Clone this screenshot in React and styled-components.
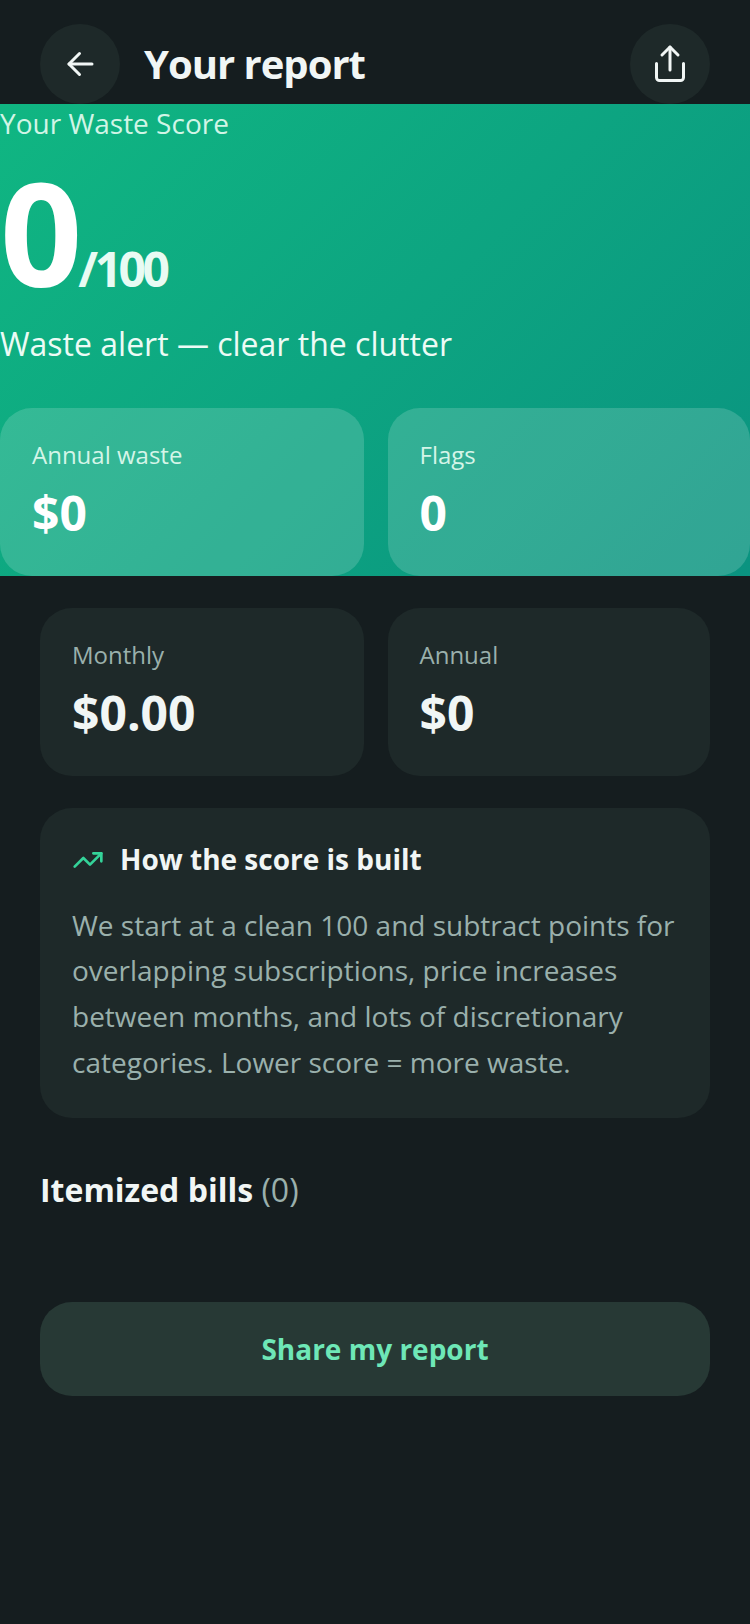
import React from "react";
import styled, { createGlobalStyle } from "styled-components";

const Global = createGlobalStyle`
  html, body { margin: 0; padding: 0; background: #151d1f; }
  body { font-family: "Open Sans", "Noto Sans", sans-serif; }
  * { box-sizing: border-box; }
`;
const Page = styled.div`
  width: 750px; height: 1624px; overflow: hidden; background: #151d1f;
  display: flex; flex-direction: column;
`;
const Header = styled.header`
  height: 104px; padding: 24px 40px 0; display: flex; align-items: flex-start; gap: 24px;
`;
const RoundButton = styled.button`
  width: 80px; height: 80px; border-radius: 50%; border: 0; padding: 0; background: #1e2929;
  color: #f1f6f5; display: flex; align-items: center; justify-content: center; flex: none;
`;
const Title = styled.h1`
  flex: 1; margin: 0; font-size: 40px; letter-spacing: -1px; line-height: 80px; font-weight: 700; color: #f1f6f5;
`;
const Hero = styled.section`
  height: 472px; background: linear-gradient(135deg, #10b682 0%, #0a9380 100%); color: #fff;
  display: flex; flex-direction: column;
`;
const HeroLabel = styled.div`
  font-size: 28px; line-height: 38px; color: #d1f5e6;
`;
const ScoreRow = styled.div`
  display: flex; align-items: baseline; height: 128px; margin-top: 25px; line-height: 128px;
`;
const ScoreValue = styled.span`
  font-size: 144px; font-weight: 700; letter-spacing: -4px; line-height: 128px;
`;
const ScoreMax = styled.span`
  font-size: 48px; font-weight: 700; letter-spacing: -3.5px; color: #e8fbf3;
`;
const Verdict = styled.div`
  font-size: 32px; line-height: 44px; margin-top: 27px; color: #ecfbf5;
`;
const Stats = styled.div`
  display: grid; grid-template-columns: ${p => p.$first} 1fr; gap: 24px;
`;
const HeroStats = styled(Stats)`
  margin-top: auto;
`;
const StatCard = styled.div`
  height: 168px; border-radius: 32px; padding: 31px 32px 0; background: ${p => p.$bg};
`;
const StatLabel = styled.div`
  font-size: 24px; line-height: 32px; color: ${p => p.$color};
`;
const StatValue = styled.div`
  font-size: 48px; line-height: 60px; font-weight: 700; margin-top: 12px; color: ${p => p.$color};
`;
const Body = styled.main`
  padding: 32px 40px 0; display: flex; flex-direction: column;
`;
const Info = styled.section`
  margin-top: 32px; height: 310px; border-radius: 32px; background: #1e2929; padding: 32px;
`;
const InfoHead = styled.div`
  display: flex; align-items: center; gap: 16px; height: 39px;
`;
const InfoTitle = styled.h2`
  margin: 0; font-size: 28px; line-height: 39px; font-weight: 700; color: #f1f6f5;
`;
const InfoText = styled.p`
  margin: 23.5px 0 0; font-size: 28px; line-height: 45.8px; color: #9ab0ac;
`;
const Bills = styled.h3`
  margin: 50px 0 0; font-size: 32px; line-height: 44px; font-weight: 700; color: #f1f6f5;
`;
const BillsCount = styled.span`
  font-weight: 400; color: #9ab0ac;
`;
const Share = styled.button`
  margin-top: 90px; height: 94px; border: 0; border-radius: 32px; background: #273935;
  color: #6ee7b7; font: 700 28px "Open Sans", sans-serif;
`;

export default function App() {
  return (
    <Page>
      <Global />
      <Header>
        <RoundButton aria-label="Back">
          <svg width="40" height="40" viewBox="0 0 40 40" fill="none" stroke="currentColor" strokeWidth="3" strokeLinecap="round" strokeLinejoin="round"><path d="M32 20H9" /><path d="M19.5 30.5 9 20 19.5 9.5" /></svg>
        </RoundButton>
        <Title>Your report</Title>
        <RoundButton aria-label="Share">
          <svg width="40" height="40" viewBox="0 0 40 40" fill="none" stroke="currentColor" strokeWidth="3" strokeLinecap="round" strokeLinejoin="round"><path d="M20 3v23" /><path d="M12 11l8-8 8 8" /><path d="M6.5 19.5V33.5a3 3 0 0 0 3 3h21a3 3 0 0 0 3-3V19.5" /></svg>
        </RoundButton>
      </Header>
      <Hero>
        <HeroLabel>Your Waste Score</HeroLabel>
        <ScoreRow><ScoreValue>0</ScoreValue><ScoreMax>/100</ScoreMax></ScoreRow>
        <Verdict>Waste alert — clear the clutter</Verdict>
        <HeroStats $first="363.5px">
          <StatCard $bg="rgba(255,255,255,0.16)">
            <StatLabel $color="#d5f5e8">Annual waste</StatLabel>
            <StatValue $color="#fff">$0</StatValue>
          </StatCard>
          <StatCard $bg="rgba(255,255,255,0.16)">
            <StatLabel $color="#d5f5e8">Flags</StatLabel>
            <StatValue $color="#fff">0</StatValue>
          </StatCard>
        </HeroStats>
      </Hero>
      <Body>
        <Stats $first="323.5px">
          <StatCard $bg="#1e2929">
            <StatLabel $color="#9ab0ac">Monthly</StatLabel>
            <StatValue $color="#f1f6f5">$0.00</StatValue>
          </StatCard>
          <StatCard $bg="#1e2929">
            <StatLabel $color="#9ab0ac">Annual</StatLabel>
            <StatValue $color="#f1f6f5">$0</StatValue>
          </StatCard>
        </Stats>
        <Info>
          <InfoHead>
            <svg width="32" height="32" viewBox="0 0 24 24" fill="none" stroke="#34d399" strokeWidth="2" strokeLinecap="round" strokeLinejoin="round"><path d="M22 7 13.5 15.5 8.5 10.5 2 17" /><path d="M16 7h6v6" /></svg>
            <InfoTitle>How the score is built</InfoTitle>
          </InfoHead>
          <InfoText>We start at a clean 100 and subtract points for overlapping subscriptions, price increases between months, and lots of discretionary categories. Lower score = more waste.</InfoText>
        </Info>
        <Bills>Itemized bills <BillsCount>(0)</BillsCount></Bills>
        <Share>Share my report</Share>
      </Body>
    </Page>
  );
}
